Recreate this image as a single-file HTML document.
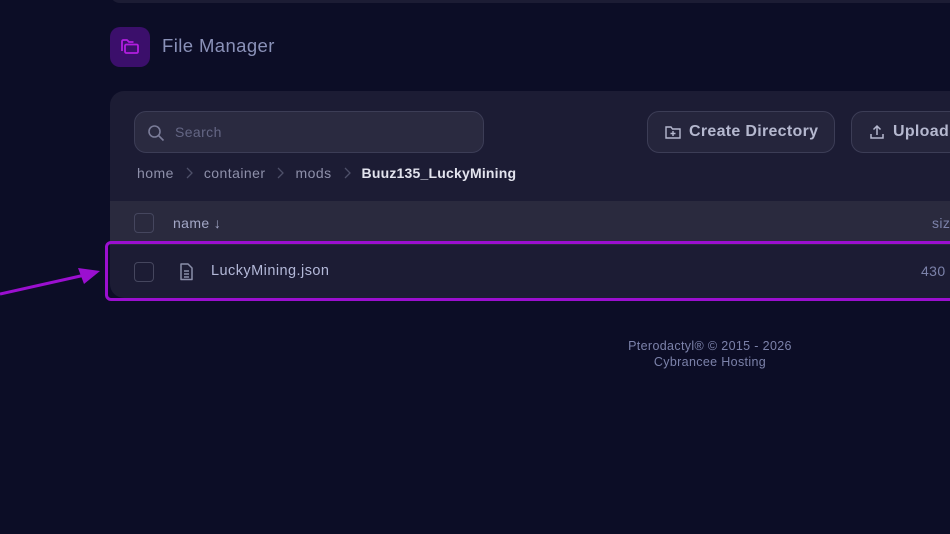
<!DOCTYPE html>
<html><head><meta charset="utf-8"><style>
*{box-sizing:border-box;margin:0;padding:0}
body{width:950px;height:534px;overflow:hidden;background:#0c0d26;font-family:"Liberation Sans",sans-serif;position:relative}
.topcard{position:absolute;left:110px;top:-20px;width:900px;height:23px;background:#1c1c34;border-radius:10px}
.icon{position:absolute;left:110px;top:27px;width:40px;height:40px;border-radius:10px;background:#3b0f6b;display:flex;align-items:center;justify-content:center}
.title{position:absolute;left:162px;top:35px;font-size:18.5px;letter-spacing:0.4px;color:#8a91b8}
.card{position:absolute;left:110px;top:91px;width:900px;height:207px;background:#1c1c34;border-radius:14px;overflow:hidden}
.search{position:absolute;left:24px;top:20px;width:350px;height:42px;border:1px solid #3c3d56;border-radius:12px;background:#2a2a40}
.search span{position:absolute;left:40px;top:12px;font-size:14px;letter-spacing:0.4px;color:#646684}
.btn{position:absolute;top:20px;height:42px;border:1px solid #3c3d56;border-radius:12px;background:#25253c;color:#b5b8cf;font-size:16px;letter-spacing:0.3px;font-weight:bold;display:flex;align-items:center;padding-left:17px;gap:8px}
.crumbs{position:absolute;left:137px;top:165px;font-size:14px;letter-spacing:0.45px;color:#8e90aa;display:flex;align-items:center;white-space:nowrap}
.crumbs svg{margin:0 11px 0 11px}
.crumbs b{color:#e3e4ee;letter-spacing:0.2px}
.head{position:absolute;left:0;top:110px;width:900px;height:44px;background:#2a2a3e}
.cb{position:absolute;width:20px;height:20px;border:1px solid #45465e;border-radius:4px}
.hl{position:absolute;left:105px;top:241px;width:860px;height:60px;border:3px solid #9b0fd0;border-radius:6px}
.foot{position:absolute;left:0;width:1420px;text-align:center;font-size:12.5px;letter-spacing:0.35px;color:#7c82aa}
</style></head><body>
<div class="topcard"></div>
<div class="icon"><svg width="22" height="20" viewBox="0 0 22 20" fill="none" stroke="#b21ee0" stroke-width="1.8" stroke-linejoin="round"><path d="M3 14V4.5Q3 3 4.5 3H8l2 2h4.5"/><path d="M6 9Q6 7.5 7.5 7.5h10Q19 7.5 19 9v5.5Q19 16 17.5 16h-10Q6 16 6 14.5z"/></svg></div>
<div class="title">File Manager</div>
<div class="card">
 <div class="search"><svg style="position:absolute;left:12px;top:12px" width="18" height="18" viewBox="0 0 18 18" fill="none" stroke="#7a7c98" stroke-width="1.6"><circle cx="7.5" cy="7.5" r="5.5"/><path d="M11.5 11.5l5 5"/></svg><span>Search</span></div>
 <div class="btn" style="left:537px;width:188px"><svg width="16" height="14" viewBox="0 0 16 14" fill="none" stroke="#b5b8cf" stroke-width="1.4"><path d="M1 2h5l1.5 2H15v9H1z"/><path d="M8 6v5M5.5 8.5h5"/></svg>Create Directory</div>
 <div class="btn" style="left:741px;width:200px"><svg width="16" height="16" viewBox="0 0 16 16" fill="none" stroke="#b5b8cf" stroke-width="1.5"><path d="M2 10v4h12v-4M8 11V2M4.5 5.5L8 2l3.5 3.5"/></svg>Upload</div>
 <div class="head">
  <div class="cb" style="left:24px;top:12px"></div>
  <div style="position:absolute;left:63px;top:14px;font-size:14px;letter-spacing:0.4px;color:#a3a7c6">name ↓</div>
  <div style="position:absolute;left:822px;top:14px;font-size:14px;letter-spacing:0.4px;color:#7c82aa">size</div>
 </div>
 <div class="cb" style="left:24px;top:171px"></div>
 <svg style="position:absolute;left:69px;top:172px" width="15" height="18" viewBox="0 0 15 18" fill="none" stroke="#8a8ea9" stroke-width="1.5"><path d="M2 1h7l4 4v11.5H2z" stroke-linejoin="round"/><path d="M5 8h5M5 11h5M5 14h5"/></svg>
 <div style="position:absolute;left:101px;top:172px;font-size:14.5px;letter-spacing:0.45px;color:#b3b8d8">LuckyMining.json</div>
 <div style="position:absolute;left:811px;top:172px;font-size:14px;letter-spacing:0.4px;color:#7c82aa">430 B</div>
</div>
<div class="crumbs">home<svg width="8" height="12" viewBox="0 0 8 12" fill="none" stroke="#4d4f68" stroke-width="1.3"><path d="M2 1l5 5-5 5"/></svg>container<svg width="8" height="12" viewBox="0 0 8 12" fill="none" stroke="#4d4f68" stroke-width="1.3"><path d="M2 1l5 5-5 5"/></svg>mods<svg width="8" height="12" viewBox="0 0 8 12" fill="none" stroke="#4d4f68" stroke-width="1.3"><path d="M2 1l5 5-5 5"/></svg><b>Buuz135_LuckyMining</b></div>
<div class="hl"></div>
<svg style="position:absolute;left:0;top:260px" width="105" height="40" viewBox="0 0 105 40"><path d="M0 34L85 15" stroke="#9b0fd0" stroke-width="3"/><path d="M100 11L78 8l6 16z" fill="#9b0fd0"/></svg>
<div class="foot" style="top:339px">Pterodactyl® © 2015 - 2026</div>
<div class="foot" style="top:355px">Cybrancee Hosting</div>
</body></html>
